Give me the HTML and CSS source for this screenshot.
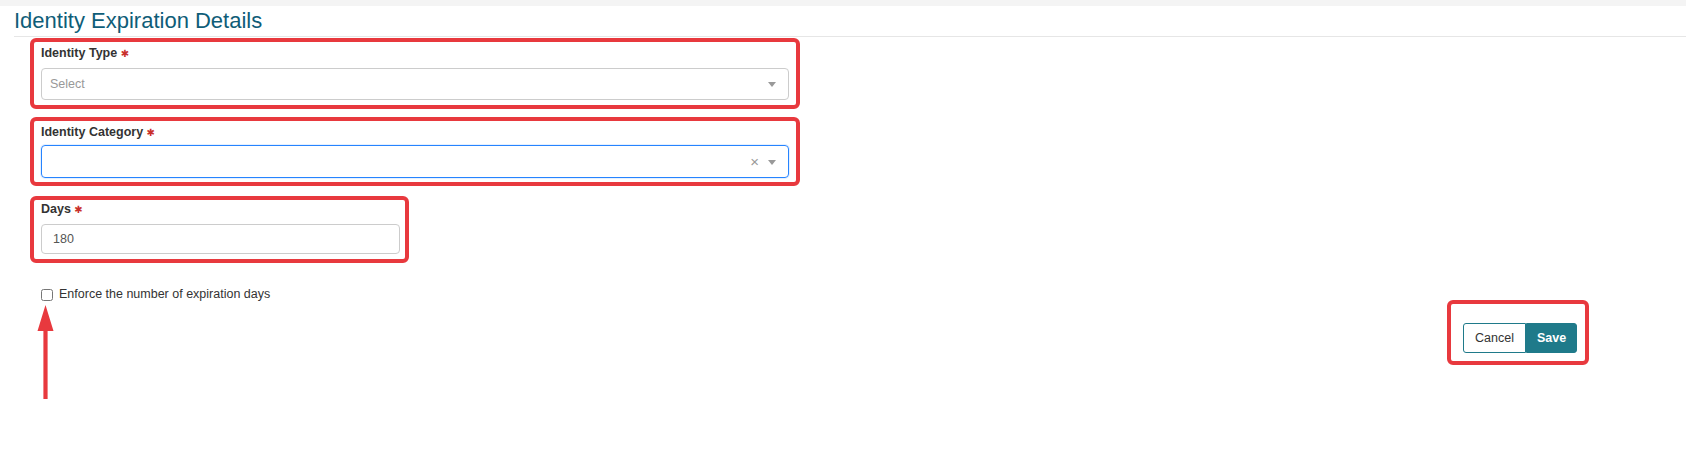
FILE: index.html
```html
<!DOCTYPE html>
<html lang="en">
  <head>
    <meta charset="UTF-8" />
    <meta name="viewport" content="width=device-width, initial-scale=1.0" />
    <title>Identity Expiration Details</title>
    <link rel="stylesheet" href="styles.css">
  </head>
  <body>
    <div class="topbar"></div>

    <div class="page-head">
      <h1 class="page-title">Identity Expiration Details</h1>
    </div>

    <form class="form">
      <div class="field field-type">
        <label class="field-label">Identity Type <span class="req">&#10033;</span></label>
        <div class="select">
          <span class="select-placeholder">Select</span>
          <span class="select-icons"><span class="caret"></span></span>
        </div>
      </div>

      <div class="field field-category">
        <label class="field-label">Identity Category <span class="req">&#10033;</span></label>
        <div class="select select-focus">
          <span class="select-placeholder"></span>
          <span class="select-icons">
            <span class="clear">&times;</span>
            <span class="caret"></span>
          </span>
        </div>
      </div>

      <div class="field field-days">
        <label class="field-label">Days <span class="req">&#10033;</span></label>
        <input class="text-input" type="text" value="180" />
      </div>

      <label class="check-row">
        <input type="checkbox" class="check" />
        Enforce the number of expiration days
      </label>

      <div class="actions">
        <div class="btn-box">
          <button type="button" class="btn btn-cancel">Cancel</button>
          <button type="button" class="btn btn-save">Save</button>
        </div>
      </div>
    </form>

    <!-- annotation arrow pointing at the checkbox -->
    <svg class="arrow" viewBox="0 0 18 96">
      <polygon points="9.5,0 17.5,26 11.6,26 11.6,94 7.4,94 7.4,26 1.5,26" fill="#e8393e" />
    </svg>
  </body>
</html>
```

FILE: styles.css
```css
body {
  margin: 0;
  font-family: "Liberation Sans", Arial, sans-serif;
  font-size: 12.5px;
  color: #333;
  background: #fff;
  position: relative;
  min-height: 455px;
}
.topbar {
  height: 6px;
  background-color: #f4f4f4;
}
.page-head {
  margin-left: 14px;
  border-bottom: 1px solid #e6e6e6;
}
.page-title {
  margin: 0;
  font-size: 22px;
  font-weight: normal;
  line-height: 30px;
  color: #0f5d78;
}
.form {
  padding-left: 30px;
}
.field {
  box-sizing: border-box;
  border: 4px solid #e8393e;
  border-radius: 6px;
  padding: 0 7px;
  display: flex;
  flex-direction: column;
}
.field-type {
  width: 770px;
  margin-top: 1px;
  padding-top: 3px;
  padding-bottom: 5px;
}
.field-category {
  width: 770px;
  margin-top: 8px;
  padding-top: 3px;
  padding-bottom: 4px;
}
.field-days {
  width: 379px;
  margin-top: 10px;
  padding-top: 1px;
  padding-bottom: 5px;
  padding-right: 5px;
}
.field-label {
  font-weight: bold;
  line-height: 16px;
  height: 16px;
  margin-bottom: 7px;
  color: #333;
}
.field-category .field-label {
  margin-bottom: 5px;
}
.req {
  font-family: "DejaVu Sans", sans-serif;
  font-size: 10px;
  line-height: 0;
  color: #c9302c;
}
.select {
  box-sizing: border-box;
  height: 32px;
  border: 1px solid #cccccc;
  border-radius: 4px;
  display: flex;
  align-items: center;
  justify-content: space-between;
  padding: 0 12px 0 8px;
}
.select-focus {
  height: 33px;
  border-color: #2684ff;
  box-shadow: 0 0 0 1px rgba(38, 132, 255, 0.12);
}
.select-placeholder {
  color: #999;
}
.select-icons {
  display: flex;
  align-items: center;
  gap: 9px;
}
.clear {
  color: #999;
  font-size: 15px;
  line-height: 1;
  margin-top: -1px;
}
.caret {
  width: 0;
  height: 0;
  border-left: 4px solid transparent;
  border-right: 4px solid transparent;
  border-top: 5px solid #999;
  margin-top: 1px;
}
.text-input {
  box-sizing: border-box;
  height: 30px;
  border: 1px solid #cccccc;
  border-radius: 4px;
  padding: 0 11px;
  font-family: inherit;
  font-size: 12.5px;
  color: #555;
  outline: none;
}
.check-row {
  display: flex;
  align-items: center;
  height: 16px;
  margin-top: 23px;
  margin-left: 11px;
  line-height: 16px;
  color: #333;
}
.check {
  width: 12px;
  height: 12px;
  margin: 1px 6px 0 0;
}
.actions {
  display: flex;
  justify-content: flex-end;
  padding-right: 97px;
  margin-top: -2px;
}
.btn-box {
  box-sizing: border-box;
  width: 142px;
  height: 65px;
  border: 4px solid #e8393e;
  border-radius: 6px;
  padding: 19px 0 0 12px;
  display: flex;
  align-items: flex-start;
}
.btn {
  height: 30px;
  font-family: inherit;
  font-size: 12.5px;
  padding: 0;
  cursor: pointer;
}
.btn-cancel {
  width: 63px;
  background: #fff;
  color: #333;
  border: 1px solid #1f7a8a;
  border-radius: 3px 0 0 3px;
}
.btn-save {
  width: 51px;
  background: #1f7a8a;
  color: #fff;
  font-weight: bold;
  border: 1px solid #1f7a8a;
  border-radius: 0 3px 3px 0;
}
.arrow {
  position: absolute;
  left: 36px;
  top: 305px;
  width: 18px;
  height: 96px;
}
```
